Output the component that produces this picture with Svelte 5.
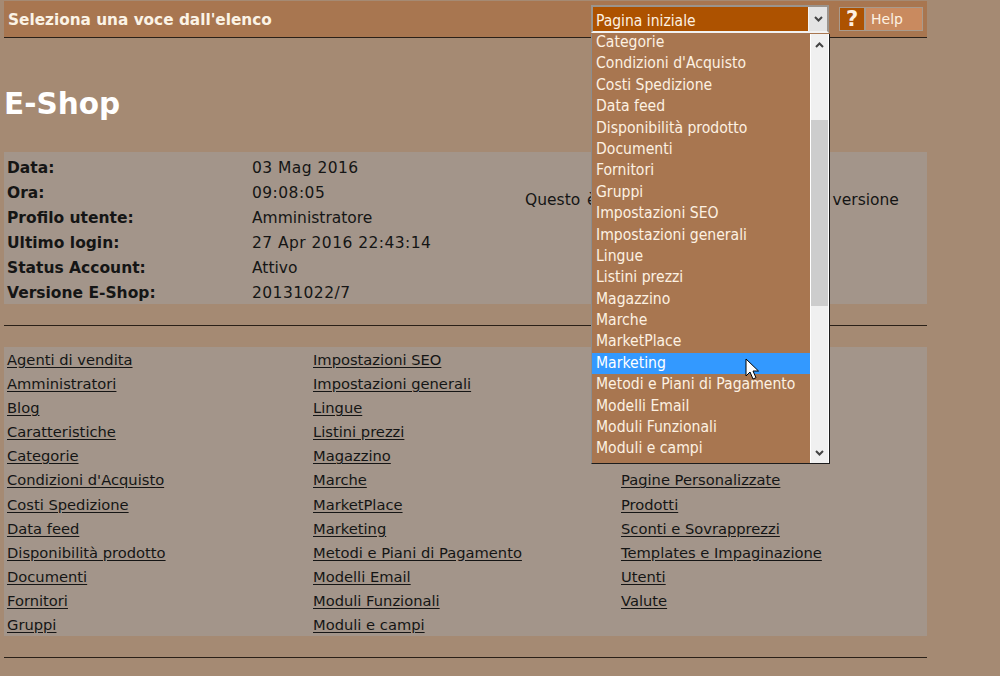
<script>
	const info = [
		['Data:', '03 Mag 2016'],
		['Ora:', '09:08:05'],
		['Profilo utente:', 'Amministratore'],
		['Ultimo login:', '27 Apr 2016 22:43:14'],
		['Status Account:', 'Attivo'],
		['Versione E-Shop:', '20131022/7']
	];

	const links = [
		'Agenti di vendita', 'Impostazioni SEO', 'Moduli Funzionali',
		'Amministratori', 'Impostazioni generali', 'Newsletter',
		'Blog', 'Lingue', 'Offerte',
		'Caratteristiche', 'Listini prezzi', 'Ordini',
		'Categorie', 'Magazzino', 'Pagamenti',
		"Condizioni d'Acquisto", 'Marche', 'Pagine Personalizzate',
		'Costi Spedizione', 'MarketPlace', 'Prodotti',
		'Data feed', 'Marketing', 'Sconti e Sovrapprezzi',
		'Disponibilità prodotto', 'Metodi e Piani di Pagamento', 'Templates e Impaginazione',
		'Documenti', 'Modelli Email', 'Utenti',
		'Fornitori', 'Moduli Funzionali', 'Valute',
		'Gruppi', 'Moduli e campi', ''
	];

	const options = [
		'Categorie', "Condizioni d'Acquisto", 'Costi Spedizione', 'Data feed',
		'Disponibilità prodotto', 'Documenti', 'Fornitori', 'Gruppi',
		'Impostazioni SEO', 'Impostazioni generali', 'Lingue', 'Listini prezzi',
		'Magazzino', 'Marche', 'MarketPlace', 'Marketing',
		'Metodi e Piani di Pagamento', 'Modelli Email', 'Moduli Funzionali',
		'Moduli e campi', 'Newsletter'
	];
</script>

<div class="page">
	<header class="bar">
		<strong class="bar__title">Seleziona una voce dall'elenco</strong>
		<div class="select">
			<span class="select__value">Pagina iniziale</span>
			<span class="select__btn">
				<svg width="9" height="6" viewBox="0 0 9 6"><path d="M1 1l3.5 3.5L8 1" fill="none" stroke="#444" stroke-width="2" /></svg>
			</span>
		</div>
		<div class="help">
			<span class="help__icon">?</span>
			<span class="help__label">Help</span>
		</div>
	</header>

	<h1>E-Shop</h1>

	<section class="panel info">
		<div class="info__rows">
			{#each info as [label, value]}
				<div class="info__row">
					<b>{label}</b>
					<span class:num={/\d/.test(value)}>{value}</span>
				</div>
			{/each}
		</div>
		<p class="info__note">Questo è il pannello di controllo della versione</p>
	</section>

	<hr class="rule-one" />

	<section class="panel links">
		{#each links as link}
			<a href="#top">{link}</a>
		{/each}
	</section>

	<hr class="rule-two" />

	<div class="dropdown">
		<ul>
			{#each options as option}
				<li class:active={option === 'Marketing'}>{option}</li>
			{/each}
		</ul>
		<div class="scroll">
			<span class="scroll__arrow">
				<svg width="9" height="6" viewBox="0 0 9 6"><path d="M1 5l3.5-3.5L8 5" fill="none" stroke="#444" stroke-width="2" /></svg>
			</span>
			<span class="scroll__track"><span class="scroll__thumb"></span></span>
			<span class="scroll__arrow">
				<svg width="9" height="6" viewBox="0 0 9 6"><path d="M1 1l3.5 3.5L8 1" fill="none" stroke="#444" stroke-width="2" /></svg>
			</span>
		</div>
	</div>

	<svg class="cursor" width="15" height="23" viewBox="0 0 15 23">
		<path d="M1 1v17l4-4 3 7 3-1.300-3-6.700h5.500z" fill="#fff" stroke="#000" stroke-width="1" />
	</svg>
</div>

<style>
	:global(body) {
		background: #a58a73;
		overflow: hidden;
	}

	.page {
		position: relative;
		width: 923px;
		height: 676px;
		margin-left: 4px;
		padding-top: 1px;
		box-sizing: border-box;
		font-family: "DejaVu Sans", Verdana, sans-serif;
		font-size: 14.700px;
		color: #151515;
	}

	.bar {
		display: flex;
		align-items: flex-start;
		height: 36px;
		padding-left: 4px;
		background: #a87650;
		border-bottom: 1px solid #2a2018;
	}

	.bar__title {
		width: 583px;
		margin-top: 10px;
		font-size: 15.300px;
		line-height: 18px;
		color: #fbf3e6;
	}

	.select {
		display: flex;
		width: 238px;
		height: 28px;
		margin-top: 4px;
		box-sizing: border-box;
		border: 2px solid #9b948d;
		border-bottom-color: #f2f2f2;
		background: #ad5200;
		font-family: "DejaVu Sans Condensed", "DejaVu Sans", sans-serif;
		font-size: 15.500px;
		color: #fdf1e2;
	}

	.select__value {
		flex: 1;
		padding-left: 3px;
		line-height: 28px;
	}

	.select__btn {
		display: flex;
		align-items: center;
		justify-content: center;
		width: 18px;
		background: #e4e4e4;
		border-left: 1px solid #f4f4f4;
	}

	.help {
		display: flex;
		width: 84px;
		height: 24px;
		margin: 6px 0 0 10px;
		box-sizing: border-box;
		border: 1px solid #a99a8c;
		background: #c98a5f;
		color: #fdf1e2;
		font-size: 14px;
	}

	.help__icon {
		width: 24px;
		background: #ad5200;
		border-right: 2px solid #a99a8c;
		text-align: center;
		font-size: 21px;
		font-weight: bold;
		line-height: 22px;
	}

	.help__label {
		padding-left: 5px;
		line-height: 22px;
	}

	h1 {
		margin: 0;
		padding: 47px 0 29px 0;
		font-size: 29.500px;
		line-height: 38px;
		font-weight: bold;
		color: #fff;
	}

	.panel {
		background: #a3958a;
	}

	.info {
		display: flex;
		align-items: flex-start;
		height: 152px;
		padding-left: 3px;
		box-sizing: border-box;
		font-size: 15.500px;
	}

	.info__rows {
		display: flex;
		flex-direction: column;
		padding-top: 4px;
		width: 518px;
	}

	.info__row {
		display: grid;
		grid-template-columns: 245px 1fr;
		height: 25px;
		line-height: 25px;
	}

	.num {
		letter-spacing: 0.450px;
	}

	.info__note {
		margin: 0;
		padding-top: 36px;
		white-space: nowrap;
		word-spacing: 2px;
		line-height: 25px;
	}

	hr {
		height: 1px;
		margin: 0;
		border: 0;
		background: #2a2018;
	}

	.rule-one {
		margin: 21px 0;
	}

	.rule-two {
		margin-top: 21px;
	}

	.links {
		display: grid;
		grid-template-columns: 306px 308px 1fr;
		grid-auto-rows: 24.100px;
		height: 289px;
		padding: 1px 0 0 3px;
		box-sizing: border-box;
		line-height: 24px;
	}

	.links a {
		justify-self: start;
		color: #151515;
		text-decoration: underline;
		text-underline-offset: 2px;
	}

	.dropdown {
		position: absolute;
		left: 587px;
		top: 34px;
		display: flex;
		width: 239px;
		height: 430px;
		box-sizing: border-box;
		border: 1px solid #1c1c1c;
		border-top: 0;
		border-left-color: #8d8d8d;
		background: #a87650;
		font-family: "DejaVu Sans Condensed", "DejaVu Sans", sans-serif;
		font-size: 15.600px;
		color: #fdf1e2;
		overflow: hidden;
	}

	.dropdown ul {
		flex: 1;
		margin: -2px 0 0;
		padding: 0;
		list-style: none;
		line-height: 21.400px;
	}

	.dropdown li {
		height: 21.400px;
		padding-left: 4px;
		white-space: nowrap;
	}

	.dropdown .active {
		background: #3399ff;
		color: #fff;
	}

	.scroll {
		display: flex;
		flex-direction: column;
		width: 19px;
		background: #f0f0f0;
		border-left: 1px solid #fff;
		border-right: 1px solid #fff;
		box-sizing: border-box;
	}

	.scroll__arrow {
		display: flex;
		flex: none;
		align-items: center;
		justify-content: center;
		height: 21px;
	}

	.scroll__track {
		flex: 1;
		padding-top: 65px;
	}

	.scroll__thumb {
		display: block;
		height: 186px;
		background: #cdcdcd;
	}

	.cursor {
		position: absolute;
		left: 741px;
		top: 358px;
	}
</style>
